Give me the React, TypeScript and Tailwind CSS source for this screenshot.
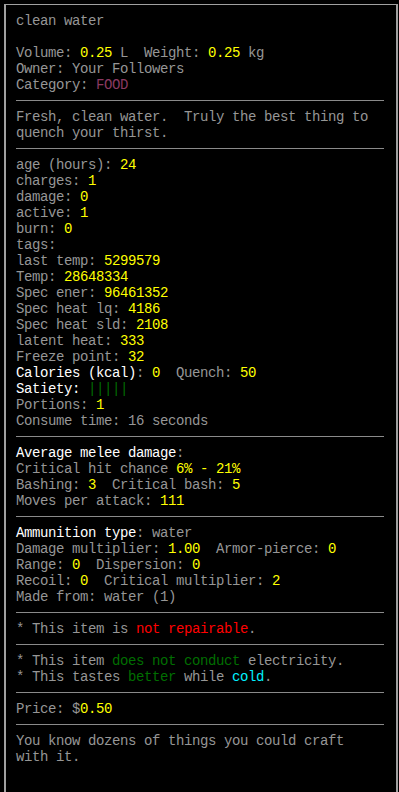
import React from "react";

const Y = ({ children }: { children: React.ReactNode }) => <span className="text-[#ffff00]">{children}</span>;
const W = ({ children }: { children: React.ReactNode }) => <span className="text-white">{children}</span>;
const R = ({ children }: { children?: React.ReactNode }) => <div className="h-4 whitespace-pre">{children}</div>;
const Sep = () => (
  <div className="h-4 pt-[7px]">
    <div className="h-px w-[368px] bg-[#8a8a8a]" />
  </div>
);

export default function App() {
  return (
    <div className="h-[792px] overflow-hidden bg-black">
      <div className="pt-1 pl-1 pr-px">
        <div
          className="h-[800px] border-t border-x-2 border-b-0 border-[#a0a0a0] pt-2 pl-[10px] text-[#969696] text-[14px] leading-4 tracking-[-0.4px]"
          style={{ fontFamily: '"Liberation Mono", "DejaVu Sans Mono", monospace' }}
        >
          <R>clean water</R>
          <R />
          <R>
            Volume: <Y>0.25</Y> L  Weight: <Y>0.25</Y> kg
          </R>
          <R>Owner: Your Followers</R>
          <R>
            Category: <span className="text-[#8b3a62]">FOOD</span>
          </R>
          <Sep />
          <R>Fresh, clean water.  Truly the best thing to</R>
          <R>quench your thirst.</R>
          <Sep />
          <R>age (hours): <Y>24</Y></R>
          <R>charges: <Y>1</Y></R>
          <R>damage: <Y>0</Y></R>
          <R>active: <Y>1</Y></R>
          <R>burn: <Y>0</Y></R>
          <R>tags:</R>
          <R>last temp: <Y>5299579</Y></R>
          <R>Temp: <Y>28648334</Y></R>
          <R>Spec ener: <Y>96461352</Y></R>
          <R>Spec heat lq: <Y>4186</Y></R>
          <R>Spec heat sld: <Y>2108</Y></R>
          <R>latent heat: <Y>333</Y></R>
          <R>Freeze point: <Y>32</Y></R>
          <R>
            <W>Calories (kcal)</W>: <Y>0</Y>  Quench: <Y>50</Y>
          </R>
          <R>
            <W>Satiety:</W> <span className="text-[#006e00]">|||||</span>
          </R>
          <R>Portions: <Y>1</Y></R>
          <R>Consume time: 16 seconds</R>
          <Sep />
          <R>
            <W>Average melee damage</W>:
          </R>
          <R>Critical hit chance <Y>6% - 21%</Y></R>
          <R>
            Bashing: <Y>3</Y>  Critical bash: <Y>5</Y>
          </R>
          <R>Moves per attack: <Y>111</Y></R>
          <Sep />
          <R>
            <W>Ammunition type</W>: water
          </R>
          <R>
            Damage multiplier: <Y>1.00</Y>  Armor-pierce: <Y>0</Y>
          </R>
          <R>
            Range: <Y>0</Y>  Dispersion: <Y>0</Y>
          </R>
          <R>
            Recoil: <Y>0</Y>  Critical multiplier: <Y>2</Y>
          </R>
          <R>Made from: water (1)</R>
          <Sep />
          <R>
            * This item is <span className="text-[#ff0000]">not repairable</span>.
          </R>
          <Sep />
          <R>
            * This item <span className="text-[#006e00]">does not conduct</span> electricity.
          </R>
          <R>
            * This tastes <span className="text-[#006e00]">better</span> while <span className="text-[#00f0ff]">cold</span>.
          </R>
          <Sep />
          <R>
            Price: $<Y>0.50</Y>
          </R>
          <Sep />
          <R>You know dozens of things you could craft</R>
          <R>with it.</R>
        </div>
      </div>
    </div>
  );
}
